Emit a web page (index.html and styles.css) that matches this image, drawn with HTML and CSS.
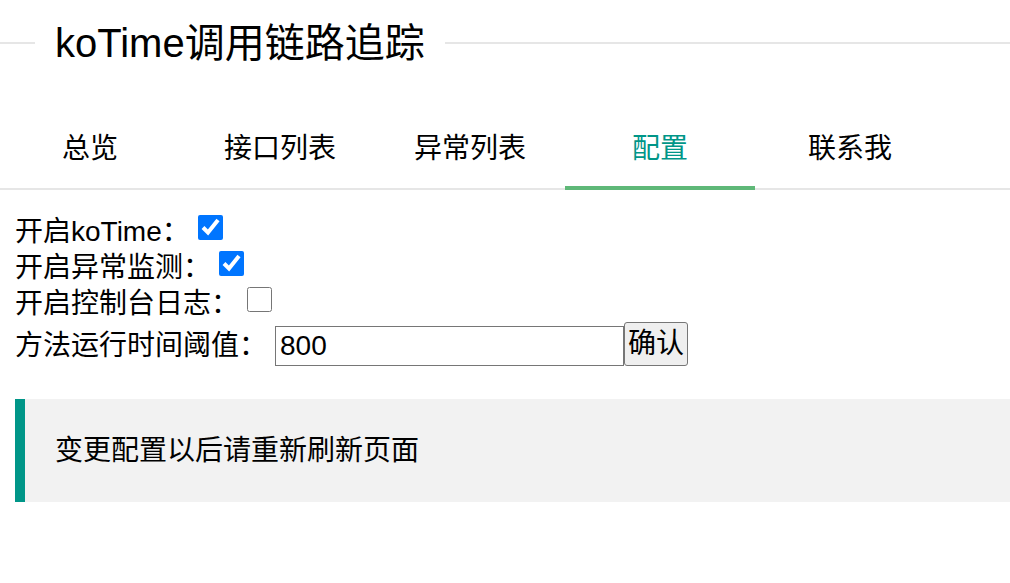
FILE: index.html
```html
<!DOCTYPE html>
<html lang="zh-CN">
<head>
<meta charset="utf-8">
<title>koTime</title>
<link rel="stylesheet" href="styles.css">
</head>
<body>
<div class="title-bar">
  <span class="title-line-left"></span>
  <h1 class="legend">koTime调用链路追踪</h1>
  <span class="title-line-right"></span>
</div>
<ul class="tabs">
  <li class="tab">总览</li>
  <li class="tab">接口列表</li>
  <li class="tab">异常列表</li>
  <li class="tab active">配置</li>
  <li class="tab">联系我</li>
</ul>
<div class="config">
  <div class="row"><span class="label">开启koTime：</span><input class="cb" type="checkbox" checked></div>
  <div class="row"><span class="label">开启异常监测：</span><input class="cb" type="checkbox" checked></div>
  <div class="row"><span class="label">开启控制台日志：</span><input class="cb" type="checkbox"></div>
  <div class="row row-input"><span class="label">方法运行时间阈值：</span><input class="num" type="text" value="800"><button class="btn">确认</button></div>
</div>
<div class="quote">变更配置以后请重新刷新页面</div>
</body>
</html>
```
FILE: styles.css
```css
html, body {
  margin: 0;
  padding: 0;
  background: #fff;
}
body {
  font-family: "Liberation Sans", "Noto Sans CJK SC", sans-serif;
  color: #000;
  overflow: hidden;
}
.title-bar {
  display: flex;
  align-items: center;
  height: 86px;
}
.title-line-left {
  width: 35px;
  height: 2px;
  background: #e6e6e6;
}
.title-line-right {
  flex: 1;
  height: 2px;
  background: #e6e6e6;
}
.legend {
  margin: 0;
  padding: 0 20px;
  font-size: 40px;
  font-weight: normal;
  line-height: 1;
}
.tabs {
  list-style: none;
  margin: 26px 0 0 -5px;
  padding: 0;
  display: flex;
  border-bottom: 2px solid #e6e6e6;
}
.tab {
  width: 190px;
  height: 76px;
  line-height: 73px;
  text-align: center;
  font-size: 28px;
  color: #000;
  position: relative;
}
.tab.active {
  color: #009688;
}
.tab.active::after {
  content: "";
  position: absolute;
  left: 0;
  right: 0;
  bottom: -2px;
  height: 4px;
  background: #5fb878;
}
.config {
  padding-left: 15px;
  margin-top: 22px;
}
.row {
  display: flex;
  align-items: center;
  height: 36px;
  font-size: 28px;
  line-height: 36px;
}
.label {
  white-space: nowrap;
  position: relative;
  top: 2px;
}
.cb {
  width: 25px;
  height: 25px;
  margin: -6px 0 0 8px;
}
.row-input {
  height: 46px;
  margin-top: 1px;
}
.num {
  box-sizing: border-box;
  width: 349px;
  height: 40px;
  margin: 4px 0 0 8px;
  padding: 0 4px;
  border: 1px solid #767676;
  font-family: "Liberation Sans", "Noto Sans CJK SC", sans-serif;
  font-size: 28px;
  color: #000;
  outline: none;
}
.btn {
  box-sizing: border-box;
  width: 64px;
  height: 44px;
  margin: 0;
  padding: 0;
  border: 1px solid #767676;
  border-radius: 3px;
  background: #efefef;
  font-family: "Liberation Sans", "Noto Sans CJK SC", sans-serif;
  font-size: 28px;
  color: #000;
  line-height: 40px;
}
.quote {
  margin: 32px 0 0 15px;
  padding: 30px 30px;
  border-left: 10px solid #009688;
  background: #f2f2f2;
  font-size: 28px;
  line-height: 43px;
}
```
